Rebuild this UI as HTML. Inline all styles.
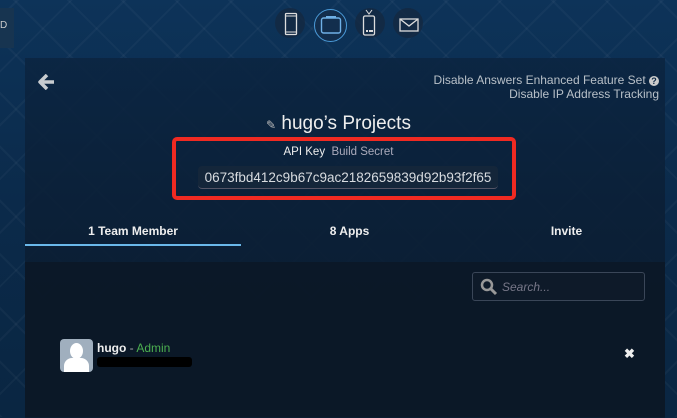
<!DOCTYPE html>
<html><head><meta charset="utf-8"><style>
*{margin:0;padding:0;box-sizing:border-box}
body{width:677px;height:417px;overflow:hidden;font-family:"Liberation Sans",sans-serif;background:#0b2744;position:relative;color:#ddd}
.bg{position:absolute;inset:0;background:
repeating-linear-gradient(45deg,rgba(255,255,255,0.03) 0 2px,transparent 2px 38px),
repeating-linear-gradient(-45deg,rgba(255,255,255,0.03) 0 2px,transparent 2px 38px),
linear-gradient(#0d3359,#0b2a4a 50%,#0a2642)}
.panel{position:absolute;left:25px;top:58px;width:640px;height:360px;background:linear-gradient(rgba(11,36,64,0.85),rgba(11,30,52,0.9) 50%,rgba(11,27,46,0.92))}
.content{position:absolute;left:25px;top:262px;width:640px;height:155px;background:rgba(12,24,38,0.85)}
.abs{position:absolute}
.circ{position:absolute;top:8px;width:30px;height:30px;border-radius:50%;background:rgba(20,40,65,0.8)}
.right{position:absolute;right:18px;font-size:12px;color:#b8c0c8;text-align:right}
</style></head><body>
<div class="bg"></div>
<div class="abs" style="left:0;top:8px;width:14px;height:40px;background:#173450;color:#ccc;font-size:10px;padding-top:12px">D</div>
<div class="circ" style="left:275px"></div>
<svg class="abs" style="left:284px;top:12px" width="14" height="24"><rect x="1.5" y="1.5" width="11" height="21" rx="1" fill="none" stroke="#ddd" stroke-width="1.3"/><line x1="2" y1="4" x2="12" y2="4" stroke="#ddd"/><line x1="2" y1="20" x2="12" y2="20" stroke="#ddd"/></svg>
<div class="abs" style="left:314px;top:9px;width:33px;height:33px;border-radius:50%;border:1.5px solid #4a9ad8;background:rgba(20,45,75,0.8)"></div>
<svg class="abs" style="left:320px;top:15px" width="22" height="20"><rect x="1.5" y="3" width="19" height="15" rx="2" fill="none" stroke="#6fb0e6" stroke-width="1.4"/><rect x="6" y="1" width="10" height="2" fill="#6fb0e6"/></svg>
<div class="circ" style="left:355px"></div>
<svg class="abs" style="left:362px;top:9px" width="14" height="28"><path d="M4 1l3 4 3-4" stroke="#ddd" fill="none"/><rect x="1.5" y="7" width="11" height="19" rx="1.5" fill="none" stroke="#ddd" stroke-width="1.3"/><rect x="4" y="21" width="2" height="2" fill="#ddd"/><rect x="7" y="21" width="4" height="2" fill="#ddd"/></svg>
<div class="circ" style="left:393px"></div>
<svg class="abs" style="left:399px;top:18px" width="20" height="14"><rect x="1" y="1" width="18" height="12" fill="none" stroke="#ddd" stroke-width="1.3"/><path d="M1 1l9 7 9-7" fill="none" stroke="#ddd" stroke-width="1.3"/></svg>
<div class="panel"></div>
<div class="content"></div>
<svg class="abs" style="left:38px;top:74px" width="18" height="16"><path d="M9 1L2 8l7 7M2 8h14" stroke="#c8ccd0" stroke-width="3.5" fill="none" stroke-linejoin="round"/></svg>
<div class="right" style="top:73px">Disable Answers Enhanced Feature Set <span style="display:inline-block;width:10px;height:10px;border-radius:50%;background:#ccc;color:#0b2744;font-size:9px;line-height:10px;text-align:center;font-weight:bold">?</span></div>
<div class="right" style="top:87px">Disable IP Address Tracking</div>
<div class="abs" style="left:0;width:677px;top:113px;text-align:center;font-size:19px;color:#eee"><span style="font-size:12px;color:#bbb">&#9998;</span> hugo’s Projects</div>
<div class="abs" style="left:172px;top:137px;width:344px;height:63px;border:4px solid #f02a22;border-radius:5px"></div>
<div class="abs" style="left:0;width:677px;top:146px;text-align:center;font-size:11.5px"><span style="color:#eee">API Key</span>&nbsp;&nbsp;<span style="color:#aab">Build Secret</span></div>
<div class="abs" style="left:198px;top:166px;width:300px;height:23px;background:#14263a;border-radius:4px;border-bottom:1px solid #556;font-size:13.5px;color:#d8dce0;text-align:center;line-height:23px">0673fbd412c9b67c9ac2182659839d92b93f2f65</div>
<div class="abs" style="left:25px;top:224px;width:216px;text-align:center;font-size:12px;font-weight:bold;color:#eee">1 Team Member</div>
<div class="abs" style="left:25px;top:244px;width:216px;height:2px;background:#6ab8ea"></div>
<div class="abs" style="left:241px;top:224px;width:217px;text-align:center;font-size:12px;font-weight:bold;color:#eee">8 Apps</div>
<div class="abs" style="left:458px;top:224px;width:217px;text-align:center;font-size:12px;font-weight:bold;color:#eee">Invite</div>
<div class="abs" style="left:472px;top:272px;width:173px;height:29px;border:1px solid #3a4658;border-radius:3px;background:#0e1a29"></div>
<svg class="abs" style="left:480px;top:278px" width="18" height="18"><circle cx="7" cy="7" r="5" stroke="#999" stroke-width="2.5" fill="none"/><path d="M11 11l5 5" stroke="#999" stroke-width="3"/></svg>
<div class="abs" style="left:502px;top:280px;font-size:12px;font-style:italic;color:#778">Search...</div>
<div class="abs" style="left:60px;top:339px;width:33px;height:33px;border-radius:4px;background:#a0afbe;overflow:hidden"><div style="position:absolute;left:10px;top:4px;width:13px;height:16px;border-radius:50%;background:#fff"></div><div style="position:absolute;left:4px;top:19px;width:25px;height:20px;border-radius:8px 8px 0 0;background:#fff"></div></div>
<div class="abs" style="left:97px;top:341px;font-size:12px"><b style="color:#eee">hugo</b> <span style="color:#aaa">-</span> <span style="color:#4caf50">Admin</span></div>
<div class="abs" style="left:97px;top:357px;width:95px;height:10px;background:#000;border-radius:3px"></div>
<div class="abs" style="left:624px;top:346px;font-size:13px;font-weight:bold;color:#eee">✖</div>
</body></html>
